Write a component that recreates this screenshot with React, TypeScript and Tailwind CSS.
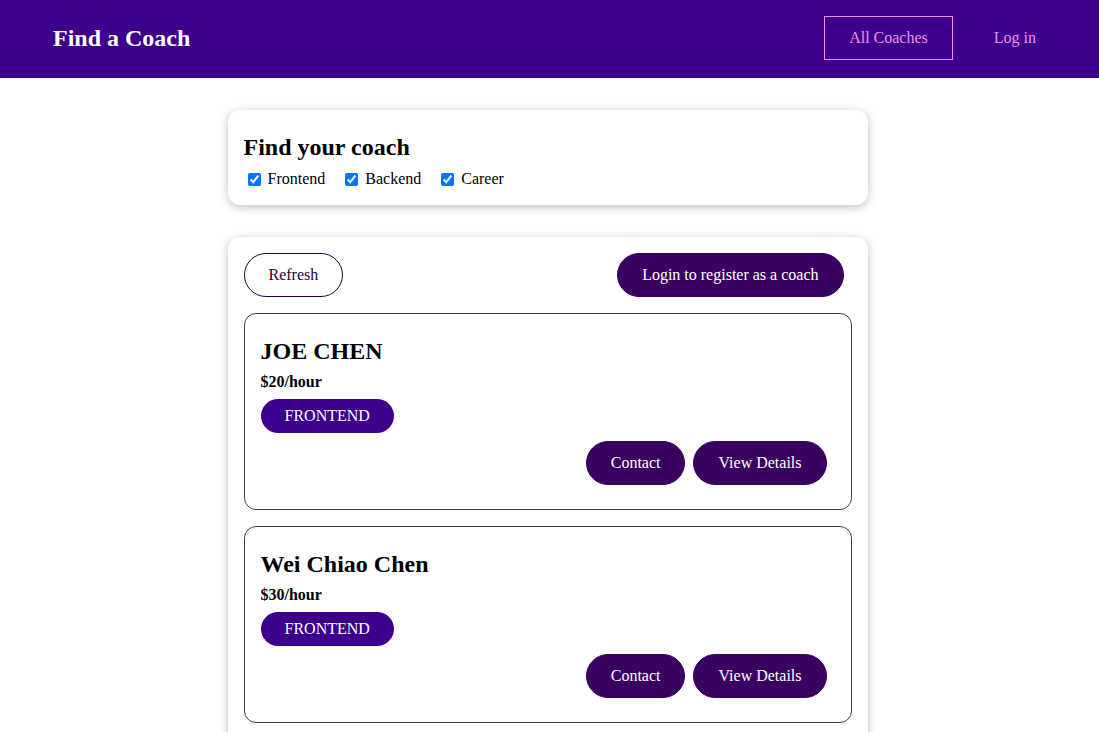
import React from "react";

const coaches = [
  { name: "JOE CHEN", rate: 20, areas: ["frontend"] },
  { name: "Wei Chiao Chen", rate: 30, areas: ["frontend"] },
];

function CoachItem({ name, rate, areas }: { name: string; rate: number; areas: string[] }) {
  return (
    <li className="border border-[#424242] rounded-[12px] px-4 pt-4 pb-[24px] my-4 list-none">
      <h3 className="text-[24px] leading-[27px] font-bold mt-2 mb-2">{name}</h3>
      <h4 className="text-[16px] leading-[18px] font-bold mb-2">${rate}/hour</h4>
      <div className="flex">
        {areas.map((a) => (
          <div
            key={a}
            className="bg-[#3d008d] text-white rounded-[30px] px-6 h-[34px] flex items-center uppercase text-[16px] mr-2"
          >
            {a}
          </div>
        ))}
      </div>
      <div className="flex justify-end mt-2">
        <button className="bg-[#3a0061] border border-[#3a0061] text-white rounded-[30px] px-6 h-[44px] text-[16px] mr-2">
          Contact
        </button>
        <button className="bg-[#3a0061] border border-[#3a0061] text-white rounded-[30px] px-6 h-[44px] text-[16px] mr-2">
          View Details
        </button>
      </div>
    </li>
  );
}

export default function App() {
  return (
    <div
      className="h-[732px] overflow-hidden bg-white text-black"
      style={{ fontFamily: '"Liberation Serif", "Times New Roman", serif' }}
    >
      <header className="h-[78px] bg-[#3d008d] flex items-center justify-between pl-[28px] pr-[30px] pb-[2px]">
        <h1 className="text-[24px] font-bold text-white px-6 border border-transparent">Find a Coach</h1>
        <ul className="flex items-center">
          <li className="mx-2">
            <a className="inline-block border border-[#f391e3] text-[#f391e3] px-6 py-3 text-[16px] leading-[18px]">
              All Coaches
            </a>
          </li>
          <li className="mx-2">
            <a className="inline-block border border-transparent text-[#f391e3] px-6 py-3 text-[16px] leading-[18px]">
              Log in
            </a>
          </li>
        </ul>
      </header>

      <main className="w-[1095px]">
        <section className="w-[640px] mx-auto mt-8 rounded-[12px] shadow-[0_2px_8px_rgba(0,0,0,0.26)] p-4">
          <h2 className="text-[24px] leading-[27px] font-bold mt-2 mb-2">Find your coach</h2>
          <div className="flex items-center h-[20px]">
            {["Frontend", "Backend", "Career"].map((f) => (
              <div key={f} className="flex items-center mr-4">
                <input
                  type="checkbox"
                  defaultChecked
                  className="w-[13px] h-[13px] m-[3px_3px_3px_4px]"
                />
                <label className="ml-1 text-[16px] leading-[18px]">{f}</label>
              </div>
            ))}
          </div>
        </section>

        <section className="w-[640px] mx-auto mt-8 rounded-[12px] shadow-[0_2px_8px_rgba(0,0,0,0.26)] p-4">
          <div className="flex justify-between">
            <button className="bg-transparent border border-[#270041] text-[#270041] rounded-[30px] px-6 h-[44px] text-[16px] mr-2">
              Refresh
            </button>
            <button className="bg-[#3a0061] border border-[#3a0061] text-white rounded-[30px] px-6 h-[44px] text-[16px] mr-2">
              Login to register as a coach
            </button>
          </div>
          <ul>
            {coaches.map((c) => (
              <CoachItem key={c.name} {...c} />
            ))}
          </ul>
        </section>
      </main>
    </div>
  );
}
